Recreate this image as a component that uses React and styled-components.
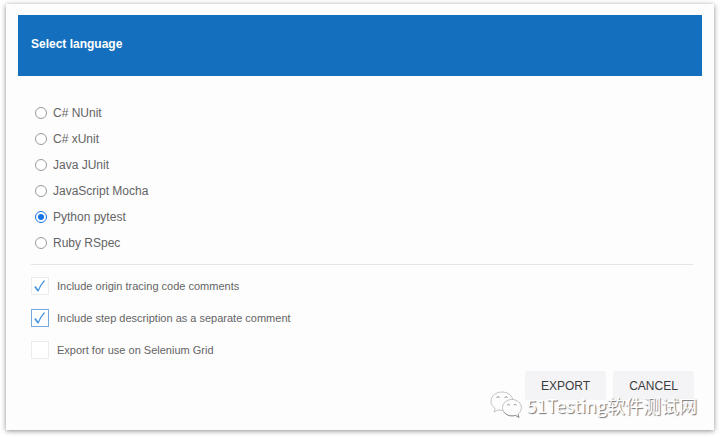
import React, { useState } from "react";
import styled, { createGlobalStyle } from "styled-components";

const GlobalStyle = createGlobalStyle`
  * {
    box-sizing: border-box;
  }

  body {
    margin: 0;
    background-color: #ffffff;
    font-family: "Liberation Sans", Arial, sans-serif;
    color: #646464;
  }
`;

const Dialog = styled.form`
  position: relative;
  margin: 4px 6px 8px;
  padding: 11px 12px 30px;
  background-color: #fdfdfe;
  box-shadow: 0 1px 5px rgba(0, 0, 0, 0.45);
`;

const Header = styled.header`
  padding: 20px 13px 23px;
  background-color: #146fbe;
`;

const Title = styled.h1`
  margin: 0;
  font-size: 12px;
  line-height: 18px;
  color: #ffffff;
`;

const Content = styled.div`
  padding: 24px 9px 0 13px;
`;

const Languages = styled.fieldset`
  margin: 0;
  padding: 0 0 8px 4px;
  border: none;
  border-bottom: 1px solid #e4e5e8;
`;

const RadioLabel = styled.label`
  display: flex;
  align-items: center;
  gap: 6px;
  height: 26px;
  font-size: 12px;
`;

const Radio = styled.input`
  appearance: none;
  display: grid;
  place-items: center;
  width: 12px;
  height: 12px;
  margin: 0;
  border: 1px solid #9a9a9a;
  border-radius: 50%;
  background-color: #ffffff;

  &:checked {
    border-color: #1673e6;
  }

  &:checked::before {
    content: "";
    width: 6px;
    height: 6px;
    border-radius: 50%;
    background-color: #1673e6;
  }
`;

const Options = styled.div`
  padding-top: 5px;
`;

const CheckLabel = styled.label`
  display: flex;
  align-items: center;
  gap: 8px;
  height: 32px;
  font-size: 11px;
`;

const CheckBox = styled.span`
  display: grid;
  width: 18px;
  height: 18px;

  > * {
    grid-area: 1 / 1;
  }
`;

const CheckInput = styled.input`
  appearance: none;
  width: 18px;
  height: 18px;
  margin: 0;
  border: 1px solid ${({ $active }) => ($active ? "#76a9dc" : "#ececee")};
  background-color: #ffffff;
`;

const Tick = styled.svg`
  width: 18px;
  height: 18px;
  fill: none;
  stroke: #4a96e0;
  pointer-events: none;
`;

const Actions = styled.div`
  display: flex;
  justify-content: flex-end;
  gap: 7px;
  padding: 5px 8px 0 0;
`;

const Button = styled.button`
  min-width: 81px;
  height: 29px;
  padding: 0 14px;
  border: none;
  border-radius: 2px;
  background-color: #f4f4f6;
  color: #3c3c3c;
  font-family: inherit;
  font-size: 12px;
`;

const Watermark = styled.div`
  position: absolute;
  right: 17px;
  bottom: 10px;
  display: flex;
  align-items: center;
  gap: 5px;
  font-family: "Noto Sans CJK SC", sans-serif;
  font-size: 18px;
  font-weight: 400;
  line-height: 30px;
  color: #ffffff;
  text-shadow: 1px 1px 1px #6e6e6e;
  pointer-events: none;
`;

const ChatLogo = styled.svg`
  width: 32px;
  height: 28px;
  fill: #fdfdfe;
  stroke: #b4b4b4;
  stroke-width: 0.8;
`;

const languages = [
  "C# NUnit",
  "C# xUnit",
  "Java JUnit",
  "JavaScript Mocha",
  "Python pytest",
  "Ruby RSpec",
];

const options = [
  { id: "tracing", label: "Include origin tracing code comments" },
  { id: "description", label: "Include step description as a separate comment" },
  { id: "grid", label: "Export for use on Selenium Grid" },
];

const App = () => {
  const [language, setLanguage] = useState("Python pytest");
  const [active, setActive] = useState("description");
  const [checked, setChecked] = useState({
    tracing: true,
    description: true,
    grid: false,
  });

  const handleToggle = (id) => {
    setActive(id);
    setChecked((prev) => ({ ...prev, [id]: !prev[id] }));
  };

  return (
    <>
      <GlobalStyle />
      <Dialog onSubmit={(e) => e.preventDefault()}>
        <Header>
          <Title>Select language</Title>
        </Header>
        <Content>
          <Languages aria-label="Language">
            {languages.map((name) => (
              <RadioLabel key={name}>
                <Radio
                  type="radio"
                  name="language"
                  value={name}
                  checked={language === name}
                  onChange={() => setLanguage(name)}
                />
                {name}
              </RadioLabel>
            ))}
          </Languages>
          <Options>
            {options.map(({ id, label }) => (
              <CheckLabel key={id}>
                <CheckBox>
                  <CheckInput
                    type="checkbox"
                    $active={active === id}
                    checked={checked[id]}
                    onChange={() => handleToggle(id)}
                  />
                  {checked[id] && (
                    <Tick viewBox="0 0 18 18" aria-hidden="true">
                      <path d="M4 9.5 7.2 14" strokeWidth="1.8" />
                      <path d="M7 14.2C8.5 10.5 10.5 6.8 13.5 3.5" strokeWidth="1.2" />
                    </Tick>
                  )}
                </CheckBox>
                {label}
              </CheckLabel>
            ))}
          </Options>
        </Content>
        <Actions>
          <Button type="submit">EXPORT</Button>
          <Button type="button">CANCEL</Button>
        </Actions>
        <Watermark>
          <ChatLogo viewBox="0 0 32 28" aria-hidden="true">
            <path d="M12 1C5.8 1 1 5 1 10.2c0 3 1.6 5.5 4.2 7.2L4 21l4.2-2.2c1.2.4 2.5.6 3.8.6 6 0 11-4 11-9.2S18 1 12 1Z" />
            <path d="M6.8 7a1.3 1.3 0 0 1 2.6 0M14.8 7a1.3 1.3 0 0 1 2.6 0" stroke="#8c8c8c" />
            <path d="M22 8.5c-5.3 0-9.5 3.6-9.5 8.2s4.2 8.2 9.5 8.2c1.2 0 2.3-.2 3.3-.5l3.7 2-1-3.2c2-1.5 3.4-3.8 3.4-6.5 0-4.6-4.2-8.2-9.4-8.2Z" />
            <path d="M17.4 14.5a1.2 1.2 0 0 1 2.4 0M24 14.5a1.2 1.2 0 0 1 2.4 0" stroke="#8c8c8c" />
            <path d="M28 23.2l1 3.2-3.7-2c-1 .3-2.1.5-3.3.5-3.5 0-6.500-1.600-8.200-4" stroke="#858585" fill="none" />
          </ChatLogo>
          <span>51Testing软件测试网</span>
        </Watermark>
      </Dialog>
    </>
  );
};

export default App;
